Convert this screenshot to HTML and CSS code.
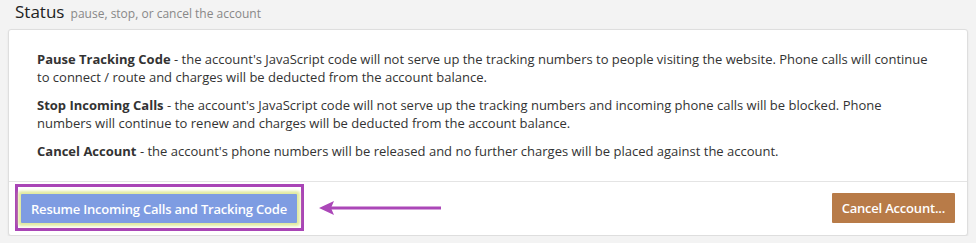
FILE: index.html
```html
<!DOCTYPE html>
<html>
<head>
<meta charset="utf-8">
<link rel="stylesheet" href="styles.css">
</head>
<body>
<div class="heading">
  <span class="title">Status</span>
  <span class="subtitle">pause, stop, or cancel the account</span>
</div>
<div class="panel">
  <div class="panel-body">
    <p><b>Pause Tracking Code</b> - the account's JavaScript code will not serve up the tracking numbers to people visiting the website. Phone calls will continue to connect / route and charges will be deducted from the account balance.</p>
    <p><b>Stop Incoming Calls</b> - the account's JavaScript code will not serve up the tracking numbers and incoming phone calls will be blocked. Phone numbers will continue to renew and charges will be deducted from the account balance.</p>
    <p><b>Cancel Account</b> - the account's phone numbers will be released and no further charges will be placed against the account.</p>
  </div>
  <div class="panel-footer">
    <div class="highlight">
      <button class="btn btn-resume">Resume Incoming Calls and Tracking Code</button>
    </div>
    <svg class="arrow" width="124" height="16" viewBox="0 0 124 16">
      <line x1="10" y1="8" x2="122" y2="8" stroke="#ab47b8" stroke-width="3"/>
      <path d="M0 8 L15 1 L12 8 L15 15 Z" fill="#ab47b8"/>
    </svg>
    <div class="spacer"></div>
    <button class="btn btn-cancel">Cancel Account...</button>
  </div>
</div>
</body>
</html>
```

FILE: styles.css
```css
html, body {
  margin: 0;
  padding: 0;
  background: #f3f3f3;
  font-family: "Open Sans", "DejaVu Sans", sans-serif;
  color: #333;
}

.heading {
  height: 29px;
  padding-left: 15px;
  box-sizing: border-box;
  padding-top: 1px;
  white-space: nowrap;
}

.title {
  font-size: 17px;
  color: #222;
  line-height: 22px;
}

.subtitle {
  font-size: 12px;
  color: #888;
  margin-left: 2px;
}

.panel {
  margin: 0 8px;
  background: #fff;
  border: 1px solid #dedede;
  border-radius: 3px;
  box-shadow: 0 1px 2px rgba(0, 0, 0, 0.08);
}

.panel-body {
  padding: 20px 28px 11px;
  font-size: 13px;
  line-height: 18px;
}

.panel-body p {
  margin: 0 0 10px;
}

.panel-body b {
  font-weight: 700;
}

.panel-footer {
  border-top: 1px solid #e4e4e4;
  display: flex;
  align-items: center;
  padding: 2px 12px 4px 6px;
}

.highlight {
  border: 3px solid #a945b6;
  padding: 7px 4px 5px 3px;
  display: flex;
}

.btn {
  font-family: "Open Sans", "DejaVu Sans", sans-serif;
  font-size: 13px;
  font-weight: 600;
  color: #fff;
  border: none;
  height: 30px;
  padding: 0 10px;
  border-radius: 1px;
  white-space: nowrap;
  letter-spacing: -0.2px;
}

.btn-resume {
  background: #7e9ce2;
  box-shadow: 0 0 3px 3px rgba(214, 226, 128, 0.75);
  height: 29px;
}

.btn-cancel {
  background: #b87b48;
}

.arrow {
  margin-left: 15px;
  margin-top: 1px;
}

.spacer {
  flex: 1;
}
```
